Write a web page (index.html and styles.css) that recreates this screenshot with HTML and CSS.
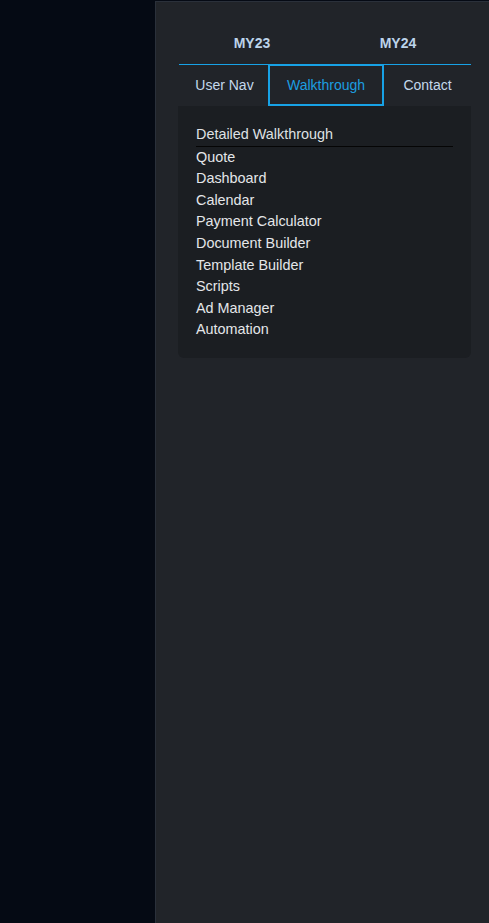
FILE: index.html
```html
<!DOCTYPE html>
<html>
<head>
<meta charset="utf-8">
<link rel="stylesheet" href="styles.css">
</head>
<body>
<div class="page">
  <div class="side"></div>
  <div class="panel">
    <div class="years">
      <div class="year">MY23</div>
      <div class="year">MY24</div>
    </div>
    <div class="tabs">
      <div class="tab tab-user">User Nav</div>
      <div class="tab tab-walk active">Walkthrough</div>
      <div class="tab tab-contact">Contact</div>
    </div>
    <div class="content">
      <div class="heading">Detailed Walkthrough</div>
      <ul class="list">
        <li>Quote</li>
        <li>Dashboard</li>
        <li>Calendar</li>
        <li>Payment Calculator</li>
        <li>Document Builder</li>
        <li>Template Builder</li>
        <li>Scripts</li>
        <li>Ad Manager</li>
        <li>Automation</li>
      </ul>
    </div>
  </div>
</div>
</body>
</html>
```
FILE: styles.css
```css
html, body {
  margin: 0;
  padding: 0;
  height: 100%;
  background: #050a14;
  font-family: "Liberation Sans", Arial, sans-serif;
}
.page {
  display: flex;
  height: 100%;
  padding-top: 1px;
  box-sizing: border-box;
}
.side {
  width: 155px;
  flex: none;
}
.panel {
  flex: 1;
  background: #212429;
  border-top: 1px solid #2a303a;
  border-left: 1px solid #2a303a;
  padding: 20px 18px 0 23px;
}
.years {
  display: flex;
  width: 292px;
  height: 42px;
  border-bottom: 1px solid #17a2e6;
}
.year {
  flex: 1;
  display: flex;
  align-items: center;
  justify-content: center;
  color: #bcd3ea;
  font-size: 14px;
  font-weight: 600;
}
.tabs {
  display: flex;
  width: 292px;
  height: 41px;
  margin-top: -1px;
}
.tab {
  display: flex;
  align-items: center;
  justify-content: center;
  color: #c4d8ec;
  font-size: 14px;
  box-sizing: border-box;
}
.tab-user { width: 89px; padding-left: 2px; }
.tab-walk { width: 116px; }
.tab-contact { width: 87px; padding-top: 1px; }
.tab.active {
  border: 2px solid #17a2e6;
  color: #1c9ee0;
  height: 42px;
  padding-bottom: 1px;
}
.content {
  width: 293px;
  margin-left: -1px;
  box-sizing: border-box;
  background: #1b1e22;
  border-radius: 0 0 6px 6px;
  padding: 18px 18px 17px 18px;
  margin-top: 1px;
}
.heading {
  color: #dfe1e4;
  font-size: 14.4px;
  line-height: 21.6px;
  padding-bottom: 0;
  border-bottom: 1px solid #050505;
}
.list {
  list-style: none;
  margin: 0;
  padding: 0;
}
.list li {
  color: #e4e6e9;
  font-size: 14.4px;
  line-height: 21.6px;
}
```
